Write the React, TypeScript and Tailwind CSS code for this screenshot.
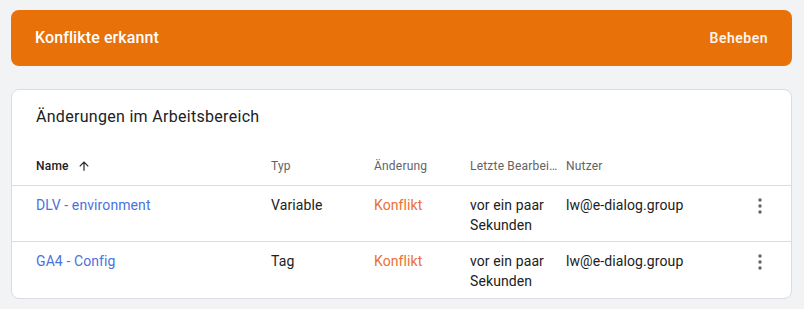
import React from "react";

type Row = {
  name: string;
  type: string;
  change: string;
  edited: string;
  user: string;
};

const rows: Row[] = [
  { name: "DLV - environment", type: "Variable", change: "Konflikt", edited: "vor ein paar Sekunden", user: "lw@e-dialog.group" },
  { name: "GA4 - Config", type: "Tag", change: "Konflikt", edited: "vor ein paar Sekunden", user: "lw@e-dialog.group" },
];

const ArrowUp = () => (
  <svg width="14" height="14" viewBox="0 0 24 24" className="fill-[#202124]">
    <path d="M4 12l1.41 1.41L11 7.83V20h2V7.83l5.58 5.59L20 12l-8-8-8 8z" />
  </svg>
);

const Kebab = () => (
  <svg width="24" height="24" viewBox="0 0 24 24" className="fill-[#5f6368]">
    <circle cx="12" cy="6" r="1.7" />
    <circle cx="12" cy="12" r="1.7" />
    <circle cx="12" cy="18" r="1.7" />
  </svg>
);

export default function App() {
  return (
    <div
      className="min-h-[309px] bg-[#f1f3f4] pt-[10px] pl-[11px] pr-[12px] text-[#202124]"
      style={{ fontFamily: "Roboto, 'Liberation Sans', sans-serif" }}
    >
      <div className="flex h-[56px] items-center justify-between rounded-lg bg-[#e8710a] pl-6 pr-6 text-white">
        <span className="text-[16px] font-medium tracking-[0.1px]">Konflikte erkannt</span>
        <button className="text-[14px] font-semibold tracking-[0.5px] text-[#fff3ea]">Beheben</button>
      </div>

      <div className="mt-[23px] rounded-lg border border-[#dadce0] bg-white">
        <div className="px-6 pt-[17px] text-[16px] leading-5 tracking-[0.3px] text-[#202124]">
          Änderungen im Arbeitsbereich
        </div>

        <div className="mt-[31px] flex items-center border-b border-[#dadce0] pb-[11px] pl-6 text-[12px] leading-4 tracking-[0.2px] text-[#5f6368]">
          <div className="flex w-[235px] items-center gap-[8px] font-medium text-[#202124]">
            Name <ArrowUp />
          </div>
          <div className="w-[103px]">Typ</div>
          <div className="w-[96px]">Änderung</div>
          <div className="w-[96px] overflow-hidden pr-[6px]">
            <div className="truncate">Letzte Bearbeitung</div>
          </div>
          <div className="flex-1">Nutzer</div>
        </div>

        {rows.map((row, i) => (
          <div
            key={row.name}
            className={`flex h-[56px] items-start pl-6 pt-[9px] text-[14px] leading-5 tracking-[0.1px] ${
              i < rows.length - 1 ? "border-b border-[#dadce0]" : ""
            }`}
          >
            <div className="w-[235px] text-[#4a72e0]">{row.name}</div>
            <div className="w-[103px]">{row.type}</div>
            <div className="w-[96px] text-[#ea6f35]">{row.change}</div>
            <div className="w-[96px] pr-2">{row.edited}</div>
            <div className="flex-1">{row.user}</div>
            <div className="mr-[19px] mt-[-1px]">
              <Kebab />
            </div>
          </div>
        ))}
      </div>
    </div>
  );
}
